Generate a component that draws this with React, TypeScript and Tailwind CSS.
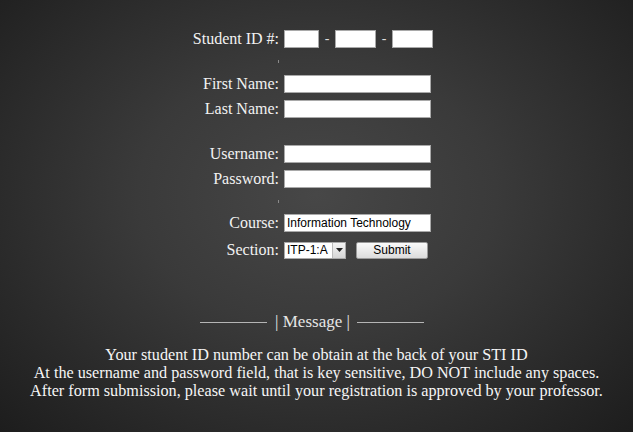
import React from 'react';

const serif = { fontFamily: '"Liberation Serif", "DejaVu Serif", serif' };

function Field({ className = '', value = '' }: { className?: string; value?: string }) {
  return (
    <input
      readOnly
      value={value}
      className={`h-[18px] bg-white border border-[#a9a9a9] px-[2px] text-[12px] text-black outline-none font-['Liberation_Sans',Arial,sans-serif] ${className}`}
    />
  );
}

function Label({ children }: { children: React.ReactNode }) {
  return <div className="text-right text-[16px] leading-[18px] text-[#f2f2f2]">{children}</div>;
}

// empty gap between groups, with the little stray mark under the labels
function Gap({ h, mark = false }: { h: string; mark?: boolean }) {
  return (
    <div className={`col-span-2 flex items-center ${h}`}>
      <div className="w-[279px] flex justify-end">
        {mark && <span className="w-px h-[3px] bg-[#8a8a8a]" />}
      </div>
    </div>
  );
}

export default function App() {
  return (
    <div
      className="w-[633px] h-[432px] overflow-hidden bg-[radial-gradient(ellipse_at_50%_45%,#474747_0%,#3a3a3a_40%,#1d1d1d_100%)]"
      style={serif}
    >
      <div className="pt-[30px] grid grid-cols-[279px_auto] gap-x-[5px] items-center">
        <Label>Student ID #:</Label>
        <div className="flex items-center">
          <Field className="w-[35px]" />
          <span className="w-[16px] text-center text-[14px] leading-[18px] text-[#ddd]">-</span>
          <Field className="w-[41px]" />
          <span className="w-[16px] text-center text-[14px] leading-[18px] text-[#ddd]">-</span>
          <Field className="w-[41px]" />
        </div>

        <Gap h="h-[27px]" mark />
        <Label>First Name:</Label>
        <Field className="w-[147px]" />
        <Gap h="h-[7px]" />
        <Label>Last Name:</Label>
        <Field className="w-[147px]" />

        <Gap h="h-[27px]" />
        <Label>Username:</Label>
        <Field className="w-[147px]" />
        <Gap h="h-[7px]" />
        <Label>Password:</Label>
        <Field className="w-[147px]" />

        <Gap h="h-[26px]" mark />
        <Label>Course:</Label>
        <Field className="w-[147px]" value="Information Technology" />
        <Gap h="h-[9px]" />
        <Label>Section:</Label>
        <div className="flex items-center gap-[10px]">
          <div className="flex h-[17px] w-[62px] bg-white border border-[#a9a9a9] font-['Liberation_Sans',Arial,sans-serif] text-[12px] text-black">
            <span className="flex-1 pl-[2px] leading-[15px]">ITP-1:A</span>
            <span className="w-[13px] border-l border-[#bbb] bg-gradient-to-b from-[#f4f4f4] to-[#d6d6d6] flex items-center justify-center">
              <svg width="7" height="4" viewBox="0 0 7 4">
                <path d="M0 0h7L3.5 4z" fill="#222" />
              </svg>
            </span>
          </div>
          <button className="h-[17px] w-[72px] border border-[#9a9a9a] rounded-[2px] bg-gradient-to-b from-[#fafafa] to-[#dcdcdc] text-[12px] leading-[15px] text-black font-['Liberation_Sans',Arial,sans-serif]">
            Submit
          </button>
        </div>
      </div>

      <div className="mt-[52px] pr-[9px] flex items-center justify-center text-[17px] leading-[22px] text-[#e6e6e6]">
        <span className="w-[67px] h-px bg-[#b5b5b5]" />
        <span className="ml-[8px] mr-[7px]">| Message |</span>
        <span className="w-[67px] h-px bg-[#b5b5b5]" />
      </div>

      <div className="mt-[13px] text-center text-[16.2px] leading-[18px] text-[#f5f5f5]">
        <p>Your student ID number can be obtain at the back of your STI ID</p>
        <p>At the username and password field, that is key sensitive, DO NOT include any spaces.</p>
        <p>After form submission, please wait until your registration is approved by your professor.</p>
      </div>
    </div>
  );
}
